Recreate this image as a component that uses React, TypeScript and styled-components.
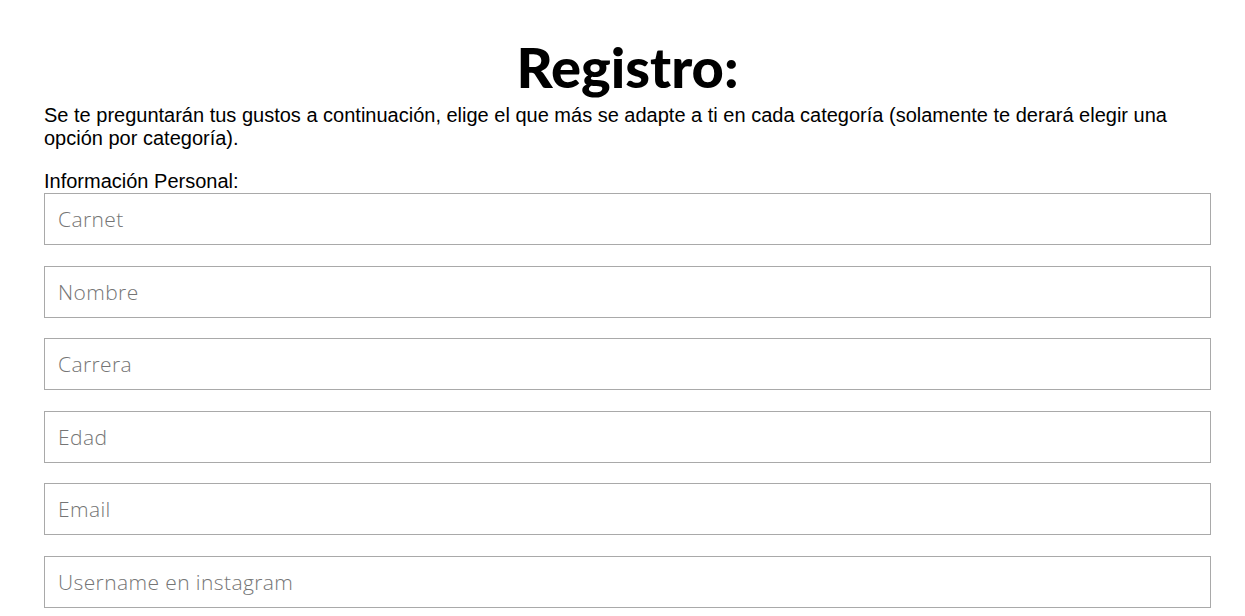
import React, { FC } from 'react';
import styled, { createGlobalStyle } from 'styled-components';

const fields = ['Carnet', 'Nombre', 'Carrera', 'Edad', 'Email', 'Username en instagram'];

const App: FC = () => {
	return (
		<>
			<GlobalStyle />
			<Page>
				<Title>Registro:</Title>
				<Intro>
					Se te preguntarán tus gustos a continuación, elige el que más se adapte a ti en cada categoría
					(solamente te derará elegir una opción por categoría).
				</Intro>
				<Section>
					<SectionLabel>Información Personal:</SectionLabel>
					<Fields>
						{fields.map((f) => (
							<Field key={f} type='text' placeholder={f} />
						))}
					</Fields>
				</Section>
			</Page>
		</>
	);
};

const GlobalStyle = createGlobalStyle`
	body {
		margin: 0;
		background: #ffffff;
		font-family: 'Liberation Sans', Arial, sans-serif;
		color: #000000;
	}
`;
const Page = styled.div`
	width: 1167px;
	margin-left: 44px;
	padding-top: 30px;
`;
const Title = styled.h1`
	margin: 0;
	text-align: center;
	font-family: Lato, 'Open Sans', sans-serif;
	font-weight: 900;
	font-size: 56px;
	line-height: 74px;
`;
const Intro = styled.p`
	margin: 0 0 20px;
	font-size: 20px;
	line-height: 23px;
`;
const Section = styled.div`
	display: flex;
	flex-direction: column;
`;
const SectionLabel = styled.label`
	font-size: 20px;
	line-height: 23px;
`;
const Fields = styled.div`
	display: flex;
	flex-direction: column;
	gap: 20.5px;
`;
const Field = styled.input`
	box-sizing: border-box;
	width: 100%;
	height: 52px;
	padding: 0 13px;
	border: 1px solid #a9a9a9;
	border-radius: 0;
	outline: none;
	font-family: 'Open Sans', Lato, sans-serif;
	font-weight: 300;
	font-size: 21px;
	letter-spacing: 0.4px;
	color: #333333;
	::placeholder {
		color: #757575;
	}
`;

export default App;
